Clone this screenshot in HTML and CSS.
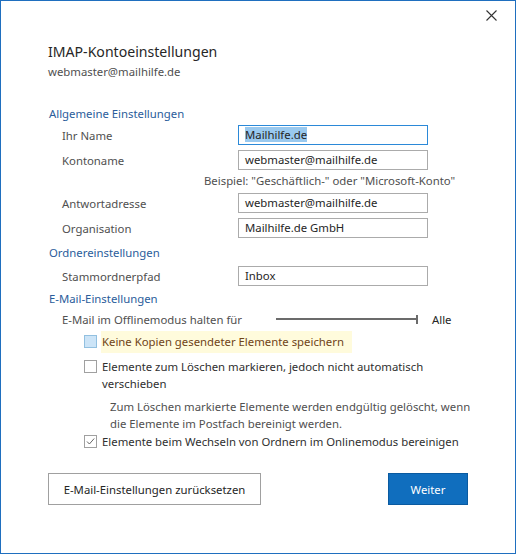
FILE: index.html
```html
<!DOCTYPE html>
<html lang="de">
<head>
<meta charset="utf-8">
<title>IMAP-Kontoeinstellungen</title>
<link rel="stylesheet" href="styles.css">
</head>
<body>
<div class="window">
  <div class="titlebar">
    <button class="close" aria-label="Schließen">
      <svg width="11" height="11" viewBox="0 0 11 11"><path d="M0.5 0.5 L10.5 10.5 M10.5 0.5 L0.5 10.5" stroke="#333" stroke-width="1.1" fill="none"/></svg>
    </button>
  </div>
  <div class="content">
    <h1 class="title">IMAP-Kontoeinstellungen</h1>
    <div class="account">webmaster@mailhilfe.de</div>

    <h2 class="section s1">Allgemeine Einstellungen</h2>
    <div class="row r1"><span class="label">Ihr Name</span><div class="input focused"><span class="sel">Mailhilfe.de</span></div></div>
    <div class="row r2"><span class="label">Kontoname</span><div class="input">webmaster@mailhilfe.de</div></div>
    <div class="hint">Beispiel: "Geschäftlich-" oder "Microsoft-Konto"</div>
    <div class="row r3"><span class="label">Antwortadresse</span><div class="input">webmaster@mailhilfe.de</div></div>
    <div class="row r4"><span class="label">Organisation</span><div class="input">Mailhilfe.de GmbH</div></div>

    <h2 class="section s2">Ordnereinstellungen</h2>
    <div class="row r5"><span class="label">Stammordnerpfad</span><div class="input">Inbox</div></div>

    <h2 class="section s3">E-Mail-Einstellungen</h2>
    <div class="offline">
      <span class="label">E-Mail im Offlinemodus halten für</span>
      <div class="slider"><span class="track"></span><span class="tick"></span></div>
      <span class="slider-value">Alle</span>
    </div>

    <div class="check hover">
      <span class="box"></span>
      <span class="check-text">Keine Kopien gesendeter Elemente speichern</span>
    </div>
    <div class="check multi">
      <span class="box"></span>
      <span class="check-text">Elemente zum Löschen markieren, jedoch nicht automatisch verschieben</span>
    </div>
    <p class="note">Zum Löschen markierte Elemente werden endgültig gelöscht, wenn die Elemente im Postfach bereinigt werden.</p>
    <div class="check checked">
      <span class="box"><svg width="11" height="11" viewBox="0 0 11 11"><path d="M2 5.5 L4.4 8 L9.2 2.5" stroke="#666" stroke-width="1" fill="none"/></svg></span>
      <span class="check-text">Elemente beim Wechseln von Ordnern im Onlinemodus bereinigen</span>
    </div>

    <div class="buttons">
      <button class="btn secondary">E-Mail-Einstellungen zurücksetzen</button>
      <button class="btn primary">Weiter</button>
    </div>
  </div>
</div>
</body>
</html>
```

FILE: styles.css
```css
* { box-sizing: border-box; }
html, body { margin: 0; padding: 0; background: #fff; }
body {
  font-family: "Segoe UI", "Noto Sans", "Open Sans", sans-serif;
  font-size: 11.35px;
  color: #444;
}
.window {
  width: 516px;
  height: 554px;
  border: 1px solid #1f6fbf;
  background: #fff;
  display: flex;
  flex-direction: column;
}
.titlebar {
  height: 30px;
  display: flex;
  justify-content: flex-end;
  align-items: flex-start;
  padding: 9px 18px 0 0;
}
.close {
  border: 0;
  background: transparent;
  padding: 0;
  width: 11px;
  height: 11px;
  display: flex;
}
.content {
  padding: 0 0 0 47px;
  display: flex;
  flex-direction: column;
}
.title {
  margin: 11px 0 0 0;
  font-size: 14.1px;
  font-weight: normal;
  line-height: 20px;
  color: #262626;
}
.account {
  margin-top: 0;
  line-height: 20px;
  color: #505050;
}
.section {
  font-size: 11.35px;
  font-weight: normal;
  line-height: 20px;
  color: #2b5d9b;
  margin: 0 0 0 1px;
}
.s1 { margin-top: 22px; }
.s2 { margin-top: 5px; }
.s3 { margin-top: 3px; }
.row {
  display: flex;
  align-items: center;
  height: 20px;
  padding-left: 14px;
}
.label {
  width: 176px;
  color: #505050;
  flex: none;
}
.input {
  width: 190px;
  height: 20px;
  border: 1px solid #ababab;
  padding: 0 6px;
  line-height: 18px;
  color: #262626;
}
.input.focused { border-color: #2b89d8; }
.sel { background: #99c9ef; }
.r1 { margin-top: 1px; }
.r2 { margin-top: 5px; }
.hint {
  padding-left: 156px;
  line-height: 20px;
  margin-top: 1px;
  color: #505050;
}
.r3 { margin-top: 2px; }
.r4 { margin-top: 5px; }
.r5 { margin-top: 3px; }
.offline {
  display: flex;
  align-items: center;
  height: 20px;
  padding-left: 14px;
  margin-top: 0;
}
.offline .label { width: 214px; }
.slider {
  width: 143px;
  height: 20px;
  display: flex;
  align-items: center;
}
.track { display: block; width: 142px; height: 2px; background: #6b6b6b; }
.tick { display: block; width: 2px; height: 9px; background: #6b6b6b; margin-left: -2px; }
.slider-value { margin-left: 13px; color: #262626; }
.check {
  display: flex;
  align-items: flex-start;
  margin-left: 36px;
  color: #303030;
}
.box {
  flex: none;
  width: 13px;
  height: 13px;
  border: 1px solid #a0a0a0;
  margin-top: 2px;
  margin-right: 5px;
  display: flex;
  align-items: center;
  justify-content: center;
}
.check-text { line-height: 17px; }
.check.hover { margin-top: 2px; }
.check.hover .box { background: #cce4f7; border-color: #92c0e0; margin-top: 4px; }
.check.hover .check-text {
  background: #fffbdc;
  color: #6f4418;
  line-height: 22px;
  padding: 0 8px 0 1px;
  margin-left: -1px;
}
.check.multi { margin-top: 5px; }
.check.multi .check-text { width: 345px; }
.note {
  margin: 6px 0 0 62px;
  width: 364px;
  line-height: 17px;
  color: #505050;
}
.check.checked { margin-top: 1px; }
.buttons {
  display: flex;
  justify-content: space-between;
  width: 420px;
  margin-top: 23px;
}
.btn {
  font-family: inherit;
  font-size: 11.35px;
  height: 32px;
  cursor: default;
}
.btn.secondary {
  width: 213px;
  background: #fff;
  border: 1px solid #a0a0a0;
  color: #262626;
}
.btn.primary {
  width: 80px;
  background: #106ebe;
  border: 1px solid #0a5aa0;
  color: #fff;
}
```
